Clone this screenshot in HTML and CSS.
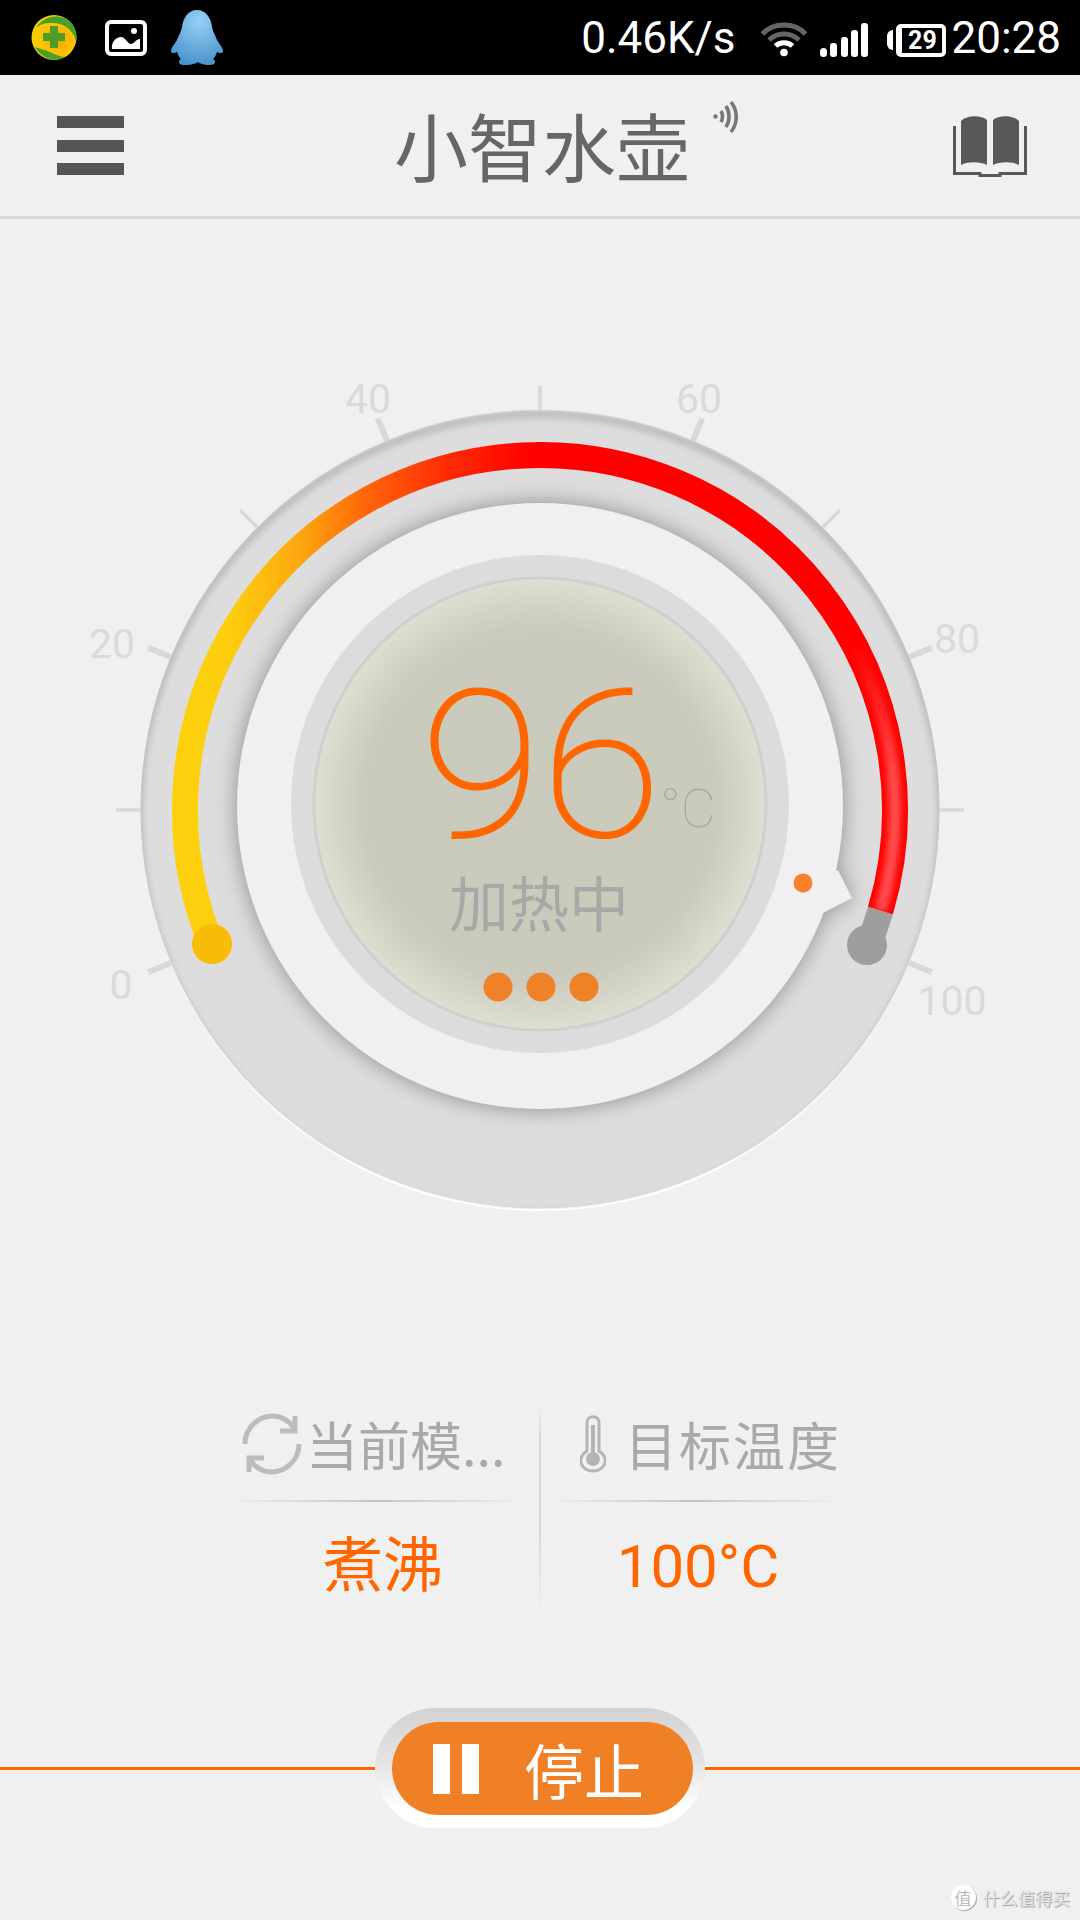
FILE: index.html
```html
<!DOCTYPE html>
<html lang="zh-CN">

<head>
    <meta charset="UTF-8">
    <meta name="viewport" content="width=device-width, initial-scale=1.0">
    <title>小智水壶</title>
    <link rel="stylesheet" href="styles.css">
</head>

<body>
    <div class="statusbar">
        <div class="status-left">
            <svg class="soft" width="46" height="47" viewBox="0 0 46 47">
                <defs>
                    <radialGradient id="guard" cx="0.6" cy="0.55" r="0.6">
                        <stop offset="0" stop-color="#f8a800" />
                        <stop offset="0.7" stop-color="#fcc800" />
                        <stop offset="1" stop-color="#f4d000" />
                    </radialGradient>
                </defs>
                <circle cx="23" cy="23.5" r="22.5" fill="url(#guard)" />
                <path d="M5 14C11 3 30-3 41 10C46 16 46 22 45 27C42 14 30 8 20 9C13 9 8 11 5 14Z" fill="#46a02c" />
                <path d="M4 33C9 42 22 50 34 43C28 43 20 38 14 36C10 35 7 34 4 33Z" fill="#46a02c" />
                <path d="M19 12H27V19H34V27H27V34H19V27H12V19H19Z" fill="#4f9a28" />
            </svg>
            <svg class="soft icon-gallery" width="42" height="36" viewBox="0 0 42 36">
                <rect x="2" y="2" width="38" height="32" rx="4" fill="none" stroke="#fff" stroke-width="4" />
                <path d="M7 29C6 22 11 17 16 17C20 17 23 24 26 24C29 24 31 19 35 19V29Z" fill="#fff" />
                <circle cx="29" cy="11" r="3" fill="#fff" />
            </svg>
            <svg class="soft" width="52" height="55" viewBox="0 0 52 55">
                <defs>
                    <radialGradient id="penguin" cx="0.55" cy="0.2" r="0.8">
                        <stop offset="0" stop-color="#96d0f6" />
                        <stop offset="1" stop-color="#4a94cc" />
                    </radialGradient>
                </defs>
                <path d="M26 0C35 0 40 8 41 17C42 22 44 25 46 30C49 35 52 38 52 41C52 44 48 43 46 42C45 45 44 47 42 49C44 50 45 52 43 54C39 56 31 55 27 52C23 55 13 56 9 54C7 52 8 50 10 49C8 47 7 45 6 42C4 43 0 44 0 41C0 38 3 35 6 30C8 25 10 22 11 17C12 8 17 0 26 0Z" fill="url(#penguin)" />
            </svg>
        </div>
        <div class="status-right">
            <span class="status-text net-speed">0.46K/s</span>
            <svg class="soft icon-wifi" width="48" height="37" viewBox="0 0 48 37" fill="none">
                <path d="M2.500 14C13 2 35 2 45.500 14" stroke="#666" stroke-width="5" />
                <path d="M9 20C17 12 31 12 39 20" stroke="#666" stroke-width="5" />
                <path d="M15.500 26C20 21.500 28 21.500 32.500 26" stroke="#fff" stroke-width="5" />
                <circle cx="24" cy="32.500" r="3.800" fill="#fff" />
            </svg>
            <svg class="soft icon-signal" width="48" height="35" viewBox="0 0 48 35" fill="#fff">
                <rect x="0" y="25" width="7" height="9" rx="3.500" />
                <rect x="10" y="20" width="7" height="14" rx="3" />
                <rect x="21" y="14" width="7" height="20" rx="3" />
                <rect x="31" y="7" width="7" height="27" rx="3" />
                <rect x="41" y="0" width="7" height="34" rx="3" />
            </svg>
            <div class="battery">
                <span class="battery-tip"></span>
                <span class="battery-body">29</span>
            </div>
            <span class="status-text clock">20:28</span>
        </div>
    </div>

    <header class="appbar">
        <div class="menu-btn">
            <span></span>
            <span></span>
            <span></span>
        </div>
        <h1 class="app-title">小智水壶
            <svg class="soft title-signal" width="26" height="34" viewBox="0 0 26 34" fill="none" stroke="#777" stroke-width="3.600">
                <circle cx="2.500" cy="15.500" r="2.200" fill="#777" stroke="none" />
                <path d="M8 10C10 13 10 18 8 21" />
                <path d="M13 5C17 11 17 20 13 26" />
                <path d="M18 1C25 10 25 22 18 31" />
            </svg>
        </h1>
        <svg class="soft book-btn" width="74" height="62" viewBox="0 0 74 62">
            <path d="M8 6C14 0 28 0 34 5V50C28 47 16 46 8 50Z" fill="#585858" />
            <path d="M66 6C60 0 46 0 40 5V50C46 47 58 46 66 50Z" fill="#585858" />
            <path d="M1.500 11V58.500H27V60.500H47V58.500H72.500V11" fill="none" stroke="#585858" stroke-width="3" />
        </svg>
    </header>

    <div class="dial">
        <svg class="dial-art" width="1080" height="1000" viewBox="0 0 1080 1000">
            <defs>
                <linearGradient id="heat" gradientUnits="userSpaceOnUse" x1="200" y1="0" x2="530" y2="0">
                    <stop offset="0" stop-color="#fdd00e" />
                    <stop offset="0.1" stop-color="#fdcc0e" />
                    <stop offset="0.3" stop-color="#fca80f" />
                    <stop offset="0.5" stop-color="#ff660a" />
                    <stop offset="0.75" stop-color="#fe2c06" />
                    <stop offset="1" stop-color="#ff0000" />
                </linearGradient>
                <linearGradient id="gloss" gradientUnits="userSpaceOnUse" x1="0" y1="340" x2="0" y2="480">
                    <stop offset="0" stop-color="#ff7070" stop-opacity="0" />
                    <stop offset="1" stop-color="#ff7070" stop-opacity="0.7" />
                </linearGradient>
                <radialGradient id="face" cx="0.5" cy="0.5" r="0.5">
                    <stop offset="0" stop-color="#cacabc" />
                    <stop offset="0.78" stop-color="#cbcbbd" />
                    <stop offset="1" stop-color="#dedfd0" />
                </radialGradient>
                <filter id="blur-edge" x="-10%" y="-10%" width="120%" height="120%">
                    <feGaussianBlur stdDeviation="3.500" />
                </filter>
                <filter id="blur-well" x="-15%" y="-15%" width="130%" height="130%">
                    <feGaussianBlur stdDeviation="11" />
                </filter>
                <filter id="blur-gloss" x="-30%" y="-10%" width="160%" height="120%">
                    <feGaussianBlur stdDeviation="3" />
                </filter>
                <clipPath id="disc">
                    <circle cx="540" cy="510" r="399.500" />
                </clipPath>
            </defs>

            <g class="ticks">
                <line class="tick-major" x1="540" y1="86" x2="540" y2="114" transform="rotate(-112.500 540 510)" />
                <line class="tick-minor" x1="540" y1="86" x2="540" y2="114" transform="rotate(-90 540 510)" />
                <line class="tick-major" x1="540" y1="86" x2="540" y2="114" transform="rotate(-67.500 540 510)" />
                <line class="tick-minor" x1="540" y1="86" x2="540" y2="114" transform="rotate(-45 540 510)" />
                <line class="tick-major" x1="540" y1="86" x2="540" y2="114" transform="rotate(-22.500 540 510)" />
                <line class="tick-minor" x1="540" y1="86" x2="540" y2="114" />
                <line class="tick-major" x1="540" y1="86" x2="540" y2="114" transform="rotate(22.500 540 510)" />
                <line class="tick-minor" x1="540" y1="86" x2="540" y2="114" transform="rotate(45 540 510)" />
                <line class="tick-major" x1="540" y1="86" x2="540" y2="114" transform="rotate(67.500 540 510)" />
                <line class="tick-minor" x1="540" y1="86" x2="540" y2="114" transform="rotate(90 540 510)" />
                <line class="tick-major" x1="540" y1="86" x2="540" y2="114" transform="rotate(112.500 540 510)" />
            </g>
            <g class="tick-labels">
                <text x="121" y="699">0</text>
                <text x="112" y="358">20</text>
                <text x="368" y="113">40</text>
                <text x="699" y="113">60</text>
                <text x="957" y="353">80</text>
                <text x="952" y="715">100</text>
            </g>

            <!-- outer ring -->
            <circle cx="540" cy="512" r="399" fill="#fff" />
            <circle cx="540" cy="509" r="399.500" fill="#ddd" />
            <g clip-path="url(#disc)">
                <circle cx="540" cy="515" r="401" fill="none" stroke="#b0b0b0" stroke-width="6" filter="url(#blur-edge)" />
                <g fill="#8c8c8c" filter="url(#blur-well)">
                    <circle cx="540" cy="506" r="303" />
                    <polygon points="838,570 852,598 823,613 790,590" />
                </g>
            </g>

            <!-- heat arc -->
            <path d="M211.300 644.100A355 355 0 1 1 880.400 610.800" fill="none" stroke="url(#heat)" stroke-width="26" />
            <path d="M855 347A355 355 0 0 1 880.400 610.800" fill="none" stroke="url(#gloss)" stroke-width="12" filter="url(#blur-gloss)" />
            <path d="M880.400 610.800A355 355 0 0 1 868.700 644.100" fill="none" stroke="#a09e9d" stroke-width="26" />
            <circle cx="212" cy="644" r="20" fill="#f8bc08" />
            <circle cx="867" cy="645" r="20" fill="#a09e9d" />

            <!-- inner well -->
            <circle cx="540" cy="506" r="303" fill="#f0f0f0" />
            <polygon points="838,570 852,598 823,613 790,590" fill="#f0f0f0" />
            <circle cx="803" cy="583" r="9.500" fill="#f98028" />

            <!-- readout -->
            <circle cx="540" cy="504" r="249" fill="#dcdcdc" />
            <circle cx="540" cy="504" r="226" fill="url(#face)" stroke="#cfcfd0" stroke-width="3" />
            <text class="temp-value" transform="translate(541 536) scale(1.08 1)">96</text>
            <text class="temp-unit" x="660" y="527">°C</text>
            <text class="temp-status" x="539" y="627">加热中</text>
            <g class="soft" fill="#ef8228">
                <circle cx="498" cy="687" r="14.500" />
                <circle cx="541" cy="687" r="14.500" />
                <circle cx="584" cy="687" r="14.500" />
            </g>
        </svg>
    </div>

    <section class="info">
        <div class="info-col info-mode">
            <div class="info-head">
                <svg class="soft" width="60" height="62" viewBox="0 0 60 62" fill="none" stroke="#bcbcbc" stroke-width="5">
                    <path d="M3 31C3 14 17 3 31 3C40 3 47 8 52 15" />
                    <path d="M53 3V18H38" />
                    <path d="M57 31C57 48 43 59 29 59C20 59 13 54 8 47" />
                    <path d="M7 59V45H22" />
                </svg>
                <span class="info-label">当前模...</span>
            </div>
            <div class="info-value">煮沸</div>
        </div>
        <div class="info-divider"></div>
        <div class="info-col info-target">
            <div class="info-head">
                <svg class="soft" width="26" height="58" viewBox="0 0 26 58" fill="none" stroke="#b4b4b4" stroke-width="3">
                    <path d="M7 36V7C7 0 19 0 19 7V36C31 44 24 56 13 56C2 56-5 44 7 36Z" />
                    <circle cx="13" cy="44" r="7" fill="#b4b4b4" stroke="none" />
                    <path d="M13 10V40" stroke-width="4" />
                </svg>
                <span class="info-label">目标温度</span>
            </div>
            <div class="info-value">100°C</div>
        </div>
    </section>

    <div class="stop-row">
        <span class="stop-line"></span>
        <div class="stop-well">
            <button class="stop-btn" type="button">
                <span class="pause-icon"></span>
                停止
            </button>
        </div>
        <span class="stop-line"></span>
    </div>

    <div class="watermark">
        <span class="watermark-logo">值</span>
        <span>什么值得买</span>
    </div>
</body>

</html>
```

FILE: styles.css
```css
* {
    box-sizing: border-box;
}

body {
    position: relative;
    width: 1080px;
    height: 1920px;
    margin: 0;
    overflow: hidden;
    background-color: #f0f0f0;
    font-family: 'Noto Sans CJK SC', sans-serif;
}

svg {
    display: block;
}

.soft {
    filter: blur(0.6px);
}

/* status bar */
.statusbar {
    display: flex;
    justify-content: space-between;
    align-items: center;
    height: 75px;
    padding: 0 19px 0 31px;
    background-color: #000;
}

.status-left,
.status-right {
    display: flex;
    align-items: center;
}

.icon-gallery {
    margin: 0 24px 0 28px;
}

.status-text {
    color: #fff;
    font-family: 'Roboto', sans-serif;
    font-size: 44px;
    font-weight: 400;
    line-height: 1;
}

.icon-wifi {
    margin: 2px 0 0 25px;
}

.icon-signal {
    margin: 5px 0 0 12px;
}

.battery {
    display: flex;
    align-items: center;
    gap: 3px;
    margin: 5px 5px 0 19px;
}

.battery-tip {
    width: 6px;
    height: 20px;
    border-radius: 6px 0 0 6px;
    background-color: #fff;
}

.battery-body {
    width: 50px;
    height: 33px;
    border: 4px solid #fff;
    border-left-width: 6px;
    border-radius: 5px;
    color: #fff;
    font-family: 'Roboto', sans-serif;
    font-size: 25px;
    font-weight: 700;
    line-height: 25px;
    text-align: center;
}

/* app bar */
.appbar {
    display: grid;
    grid-template-columns: 1fr auto 1fr;
    align-items: center;
    height: 144px;
    padding: 0 53px 0 57px;
    border-bottom: 3px solid #d9d9d9;
}

.menu-btn {
    display: flex;
    flex-direction: column;
    gap: 11.5px;
    width: 67px;
}

.menu-btn span {
    height: 12px;
    background-color: #555;
}

.app-title {
    position: relative;
    margin: -4px 0 0;
    color: #666;
    font-size: 74px;
    font-weight: 400;
    line-height: 1;
}

.title-signal {
    position: absolute;
    top: -6px;
    left: 319px;
}

.book-btn {
    justify-self: end;
    margin-top: 1px;
}

/* dial */
.dial {
    margin-top: 81px;
    height: 1000px;
}

.tick-major,
.tick-minor {
    stroke: #d8d8d8;
}

.tick-major {
    stroke-width: 6;
}

.tick-minor {
    stroke-width: 3.5;
}

.tick-labels text {
    fill: #dadada;
    font-family: 'Roboto', sans-serif;
    font-size: 41px;
    text-anchor: middle;
}

.temp-value {
    fill: #f60;
    stroke: #f60;
    stroke-width: 2;
    font-family: 'Roboto', sans-serif;
    font-size: 204px;
    font-weight: 100;
    text-anchor: middle;
}

.temp-unit {
    fill: #a8a8a8;
    font-family: 'Roboto', sans-serif;
    font-size: 54px;
    font-weight: 100;
}

.temp-status {
    fill: #a8a8a8;
    font-size: 60px;
    text-anchor: middle;
}

/* mode and target */
.info {
    display: flex;
    margin-top: 104px;
    padding-left: 228px;
}

.info-col {
    display: flex;
    flex-direction: column;
}

.info-mode {
    width: 298px;
}

.info-target {
    width: 294px;
    margin-left: 6px;
}

.info-divider {
    width: 2px;
    height: 212px;
    margin-left: 13px;
    background: linear-gradient(to bottom, rgba(216, 216, 216, 0), #d8d8d8 15%, #d8d8d8 60%, rgba(216, 216, 216, 0));
}

.info-head {
    display: flex;
    align-items: center;
    height: 98px;
    padding-bottom: 19px;
    background: linear-gradient(to right, rgba(190, 190, 190, 0), #c4c4c4 50%, rgba(190, 190, 190, 0)) bottom / 100% 2px no-repeat;
}

.info-mode .info-head {
    gap: 4px;
    padding-left: 14px;
}

.info-target .info-head {
    gap: 19px;
    padding-left: 33px;
}

.info-label {
    color: #a9a9a9;
    font-size: 52px;
    line-height: 1;
    white-space: nowrap;
}

.info-target .info-label {
    letter-spacing: 2px;
}

.info-value {
    height: 122px;
    color: #f60;
    font-family: 'Roboto', 'Noto Sans CJK SC', sans-serif;
    font-size: 60px;
    line-height: 130px;
    text-align: center;
}

.info-mode .info-value {
    padding-left: 12px;
}

.info-target .info-value {
    padding-left: 8px;
}

/* stop button */
.stop-row {
    display: flex;
    align-items: center;
    margin-top: 84px;
}

.stop-line {
    flex: 1;
    height: 3px;
    background-color: #f60;
}

.stop-well {
    width: 330px;
    height: 120px;
    padding: 14px 12px 13px 17px;
    border-radius: 60px;
    background: linear-gradient(to bottom, #d2d2d2, #e4e4e4 45%, #fff 85%);
}

.stop-btn {
    display: flex;
    align-items: center;
    width: 100%;
    height: 100%;
    padding: 0 0 0 41px;
    border: none;
    border-radius: 47px;
    background-color: #ef8026;
    color: #fff;
    font-family: inherit;
    font-size: 60px;
    line-height: 1;
}

.pause-icon {
    width: 46px;
    height: 50px;
    margin-right: 45px;
    border-left: 17px solid #fff;
    border-right: 17px solid #fff;
}

/* watermark */
.watermark {
    position: absolute;
    right: 10px;
    bottom: 10px;
    display: flex;
    align-items: center;
    gap: 7px;
    color: #e6e6e6;
    font-size: 17.5px;
    text-shadow: 1px 1px 1px #999;
}

.watermark-logo {
    width: 25px;
    height: 25px;
    border-radius: 50%;
    background-color: #fff;
    box-shadow: 1px 1px 1px #aaa;
    color: #bbb;
    font-size: 17px;
    line-height: 25px;
    text-align: center;
    text-shadow: none;
}
```
